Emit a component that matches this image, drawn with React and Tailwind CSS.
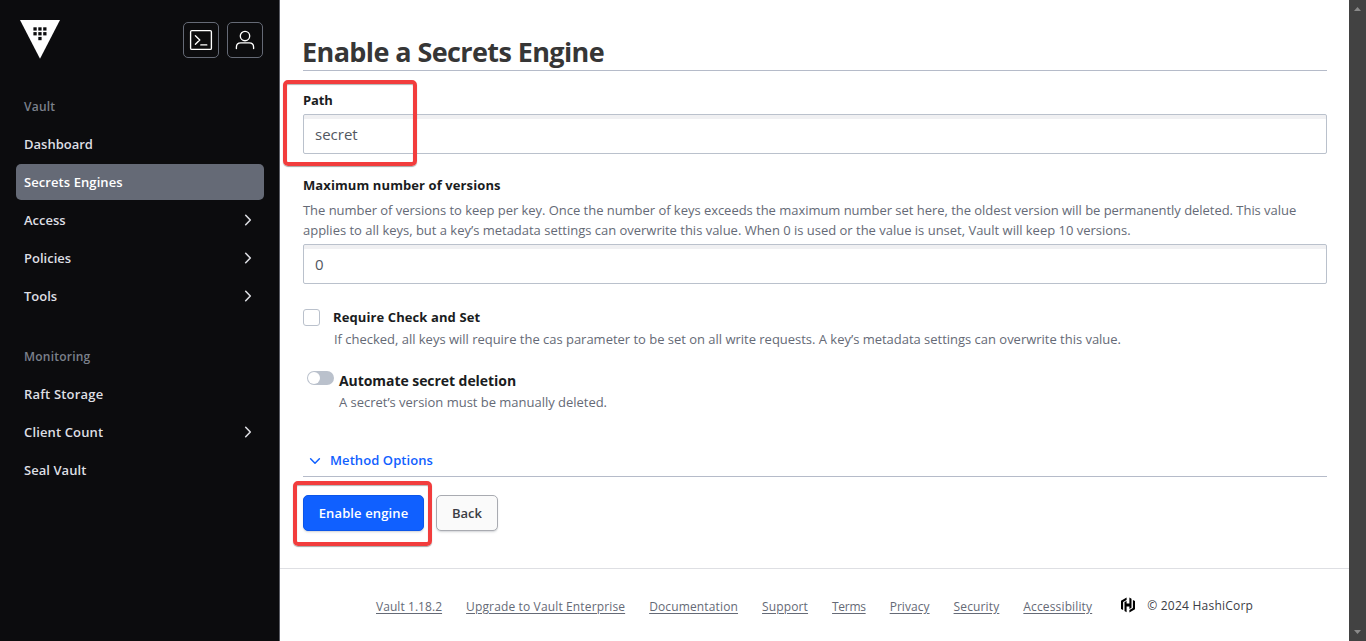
function Chevron() {
  return (
    <svg width="16" height="16" viewBox="0 0 16 16" fill="none" className="-mt-0.5 shrink-0">
      <path d="M5.7 3.3 10.3 8l-4.6 4.7" stroke="#dcdde2" strokeWidth="1.6" strokeLinecap="round" strokeLinejoin="round" />
    </svg>
  );
}

function NavItem({ label, tracking = "", active = false, expandable = false }) {
  return (
    <a
      className={
        "flex h-9 items-center justify-between rounded-[5px] px-2 pt-0.5 text-[13px] font-semibold " +
        (active ? "bg-[#656a76] text-white " : "text-[#dedfe3] ") +
        tracking
      }
    >
      <span>{label}</span>
      {expandable && <Chevron />}
    </a>
  );
}

function NavHeading({ label }) {
  return (
    <div className="flex h-9 items-center px-2 pt-0.5 text-[12px] font-semibold tracking-[0.22px] text-[#7b808b]">{label}</div>
  );
}

function VaultLogo() {
  return (
    <svg width="40" height="39" viewBox="0 0 40 39" className="mb-px ml-1">
      <path d="M0 0h40L20 38.7z" fill="#fff" />
      <g fill="#0c0c0e">
        <rect x="13.4" y="7.3" width="3.3" height="3.3" />
        <rect x="18.3" y="7.3" width="3.3" height="3.3" />
        <rect x="23.2" y="7.3" width="3.3" height="3.3" />
        <rect x="13.4" y="12.1" width="3.3" height="3.3" />
        <rect x="18.3" y="12.1" width="3.3" height="3.3" />
        <rect x="23.2" y="12.1" width="3.3" height="3.3" />
        <rect x="18.3" y="16.9" width="3.3" height="3.3" />
      </g>
    </svg>
  );
}

function Sidebar() {
  return (
    <aside className="flex w-[280px] shrink-0 flex-col border-r border-[#5a5c64] bg-[#0c0c0e] pl-4 pr-[15px]">
      <div className="flex h-[60px] items-end justify-between pr-px">
        <VaultLogo />
        <div className="flex gap-2 pb-0.5">
          <button className="flex size-9 items-center justify-center rounded-[5px] border border-[#656a76]">
            <svg width="24" height="24" viewBox="0 0 24 24" fill="none" stroke="#fff" strokeWidth="1.35" strokeLinecap="round" strokeLinejoin="round">
              <rect x="1.6" y="2.6" width="20.8" height="18.8" rx="1.2" />
              <path d="M6.4 7.8 10.8 12l-4.4 4.2M11.8 16.9h6" />
            </svg>
          </button>
          <button className="flex size-9 items-center justify-center rounded-[5px] border border-[#656a76]">
            <svg width="24" height="24" viewBox="0 0 24 24" fill="none" stroke="#fff" strokeWidth="1.35" strokeLinecap="round">
              <circle cx="12" cy="8" r="4.7" />
              <path d="M3.4 20.6v-1.4c0-2.6 1.8-4.4 4.4-4.4h8.4c2.6 0 4.4 1.8 4.4 4.4v1.4" />
            </svg>
          </button>
        </div>
      </div>
      <nav className="mt-7 flex flex-col gap-0.5">
        <NavHeading label="Vault" />
        <NavItem label="Dashboard" />
        <NavItem label="Secrets Engines" active tracking="tracking-[0.08px]" />
        <NavItem label="Access" expandable />
        <NavItem label="Policies" expandable />
        <NavItem label="Tools" expandable />
      </nav>
      <nav className="mt-6 flex flex-col gap-0.5">
        <NavHeading label="Monitoring" />
        <NavItem label="Raft Storage" tracking="tracking-[0.18px]" />
        <NavItem label="Client Count" expandable tracking="tracking-[0.14px]" />
        <NavItem label="Seal Vault" tracking="tracking-[0.05px]" />
      </nav>
    </aside>
  );
}

function TextInput({ value }) {
  return (
    <div className="flex h-10 items-center rounded-[2px] border border-[#bac1cc] px-[11px] pt-px text-[15px] text-[#525761] shadow-[inset_0_4px_0_#f0f0f2]">
      {value}
    </div>
  );
}

function FooterLink({ children, className = "" }) {
  return <a className={"text-[#656a76] underline underline-offset-2 " + className}>{children}</a>;
}

function Footer() {
  return (
    <footer className="flex h-[73px] items-center gap-6 border-t border-[#dedfe3] pl-[96px] pt-[3px] text-[12px] tracking-[0.14px] whitespace-nowrap">
      <FooterLink className="tracking-[0.06px]">Vault 1.18.2</FooterLink>
      <FooterLink>Upgrade to Vault Enterprise</FooterLink>
      <FooterLink>Documentation</FooterLink>
      <FooterLink>Support</FooterLink>
      <FooterLink className="tracking-[-0.3px]">Terms</FooterLink>
      <FooterLink className="tracking-[0.05px]">Privacy</FooterLink>
      <FooterLink>Security</FooterLink>
      <FooterLink>Accessibility</FooterLink>
      <div className="ml-1 flex items-center gap-[11px] pb-0.5 text-[#3b3d45]">
        <svg width="16" height="16" viewBox="0 0 16 16" fill="#000" className="-mt-px">
          <path d="M6.6.5 1 3.7v8.2l2.1 1.2V5l3.5-2z" />
          <path d="M9.4.5v5.9H6.6V3.9L4.5 5.1v9l2.1 1.2V9.4h2.8v2.5l2.1-1.2V1.7z" />
          <path d="m12.9 2.9 2.1 1.2v8.2l-5.6 3.2V13l3.5-2z" />
        </svg>
        <span className="tracking-[0.23px]">© 2024 HashiCorp</span>
      </div>
    </footer>
  );
}

function Scrollbar() {
  return (
    <div className="flex w-[17px] shrink-0 flex-col items-center justify-between bg-[#424242] py-[7px]">
      <svg width="7" height="4" viewBox="0 0 7 4"><path d="M3.5 0 7 4H0z" fill="#8a8a8a" /></svg>
      <svg width="7" height="4" viewBox="0 0 7 4"><path d="M0 0h7L3.5 4z" fill="#8a8a8a" /></svg>
    </div>
  );
}

export default function App() {
  return (
    <div className="flex h-[641px] w-[1366px] overflow-hidden bg-white font-['Open_Sans','Noto_Sans',sans-serif] text-[13px]">
      <Sidebar />
      <div className="flex min-w-0 flex-1 flex-col">
        <main className="flex flex-1 flex-col pl-[23px] pr-[22px] text-[#1a1c21]">
          <h1 className="flex h-[71px] items-end border-b border-[#b5bbc9] text-[27px] leading-[36px] font-bold tracking-[-0.6px] text-[#363636]">
            <span className="-ml-px">Enable a Secrets Engine</span>
          </h1>

          <div className="relative mt-[19px]">
            <label className="block leading-5 font-bold tracking-[-0.1px]">Path</label>
            <div className="mt-1">
              <TextInput value="secret" />
            </div>
            <div className="absolute -top-[10.5px] -left-[20px] h-[86px] w-[134px] rounded-[5px] border-4 border-[#f23d3d] shadow-[0_1px_1px_rgba(0,0,0,0.35),inset_0_1px_1px_rgba(0,0,0,0.3)]" />
          </div>

          <div className="mt-[21px]">
            <label className="block leading-5 font-bold tracking-[0.1px]">Maximum number of versions</label>
            <p className="mt-[5px] leading-5 whitespace-nowrap text-[#656a76]">
              <span className="tracking-[-0.036px]">
                The number of versions to keep per key. Once the number of keys exceeds the maximum number set here, the
                oldest version will be permanently deleted. This value
              </span>
              <br />
              <span className="tracking-[-0.012px]">
                applies to all keys, but a key’s metadata settings can overwrite this value. When 0 is used or the value
                is unset, Vault will keep 10 versions.
              </span>
            </p>
            <div className="mt-1">
              <TextInput value="0" />
            </div>
          </div>

          <div className="mt-[23px] flex gap-[13px]">
            <div className="mt-[2px] size-[17px] shrink-0 rounded-[3px] border border-[#bac1cc]" />
            <div>
              <div className="leading-5 font-bold tracking-[0.1px]">Require Check and Set</div>
              <p className="mt-0.5 pl-px leading-5 tracking-[-0.018px] text-[#656a76]">
                If checked, all keys will require the cas parameter to be set on all write requests. A key’s metadata
                settings can overwrite this value.
              </p>
            </div>
          </div>

          <div className="mt-[21px] flex gap-[5px] pl-1">
            <div className="mt-px flex h-[14px] w-[27px] shrink-0 items-center rounded-full bg-[#bac1cc] px-px">
              <div className="size-3 rounded-full bg-white" />
            </div>
            <div>
              <div className="pt-px text-[14px] leading-5 font-bold tracking-[-0.06px]">Automate secret deletion</div>
              <p className="mt-px leading-5 tracking-[-0.022px] text-[#656a76]">
                A secret’s version must be manually deleted.
              </p>
            </div>
          </div>

          <div className="mt-[38px] flex h-[27px] items-start gap-[7px] border-b border-[#b5bbc9] pl-1 text-[#1060ff]">
            <svg width="16" height="16" viewBox="0 0 16 16" fill="none" className="mt-[3px]">
              <path d="M3.6 5.8 8 10.2l4.4-4.4" stroke="currentColor" strokeWidth="1.5" strokeLinecap="round" strokeLinejoin="round" />
            </svg>
            <span className="leading-5 font-semibold tracking-[0.08px]">Method Options</span>
          </div>

          <div className="relative mt-[18px] flex gap-3">
            <button className="h-9 w-[121px] rounded-[5px] border border-[#0c56e9] bg-[#1060ff] pt-0.5 font-semibold tracking-[0.12px] text-white shadow-[0_1px_1px_rgba(101,106,118,0.15),0_2px_2px_rgba(101,106,118,0.1)]">
              Enable engine
            </button>
            <button className="h-9 w-[62px] rounded-[5px] border border-[#a9abb1] bg-[#fafafa] pt-0.5 font-semibold text-[#3b3d45] shadow-[0_1px_1px_rgba(101,106,118,0.15),0_2px_2px_rgba(101,106,118,0.1)]">
              Back
            </button>
            <div className="absolute -top-[14.5px] -left-[10px] h-[65px] w-[139px] rounded-[5px] border-4 border-[#f23d3d] shadow-[0_1px_1px_rgba(0,0,0,0.35),inset_0_1px_1px_rgba(0,0,0,0.3)]" />
          </div>
        </main>
        <Footer />
      </div>
      <Scrollbar />
    </div>
  );
}
